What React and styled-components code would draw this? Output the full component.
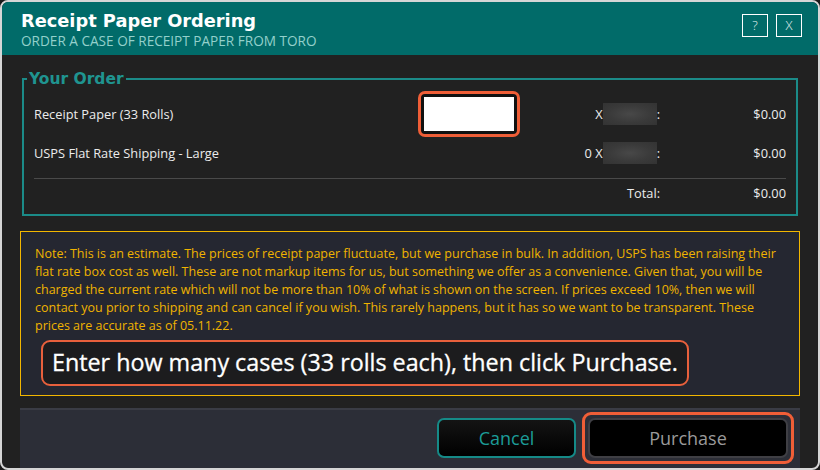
import React from "react";
import styled, { createGlobalStyle } from "styled-components";

const GlobalStyle = createGlobalStyle`
  html, body {
    margin: 0;
    padding: 0;
    background: #1a1a1a;
  }
  * {
    box-sizing: border-box;
  }
`;

const UI_FONT = `"Open Sans", "Noto Sans", sans-serif`;
const HEAD_FONT = `"DejaVu Sans", Verdana, sans-serif`;

const Window = styled.div`
  width: 820px;
  height: 470px;
  display: flex;
  flex-direction: column;
  background: #212121;
  border: 2px solid #d6d6d6;
  border-radius: 8px;
  overflow: hidden;
  font-family: ${UI_FONT};
`;

const TitleBar = styled.div`
  height: 53px;
  flex: none;
  background: #016b69;
  display: flex;
  justify-content: space-between;
  align-items: flex-start;
  padding: 8px 16px 0 19px;
`;

const TitleText = styled.div`
  display: flex;
  flex-direction: column;
`;

const Title = styled.h1`
  margin: 0;
  font-family: ${HEAD_FONT};
  font-weight: 700;
  font-size: 17.8px;
  line-height: 22px;
  color: #fff;
`;

const Subtitle = styled.div`
  font-size: 13.6px;
  line-height: 18px;
  color: #93d0cb;
`;

const TitleButtons = styled.div`
  display: flex;
  gap: 8px;
  margin-top: 4px;
`;

const TitleButton = styled.button`
  width: 26px;
  height: 23px;
  padding: 0;
  background: transparent;
  border: 1.5px solid #fff;
  color: #e8f4f3;
  font-family: ${UI_FONT};
  font-size: 13px;
  font-weight: 300;
  line-height: 1;
  cursor: pointer;
`;

const Body = styled.div`
  flex: 1;
  display: flex;
  flex-direction: column;
  padding: 15px 18px 0 18px;
`;

const OrderSet = styled.fieldset`
  margin: 0 2px;
  padding: 3px 10px 8px 10px;
  border: 2px solid #1b8b88;
  min-width: 0;
`;

const Legend = styled.legend`
  padding: 0 2px;
  margin-left: -7px;
  font-family: ${HEAD_FONT};
  font-weight: 700;
  font-size: 15.5px;
  line-height: 18px;
  color: #1f9490;
`;

const OrderGrid = styled.div`
  display: grid;
  grid-template-columns: 384px 102px 140px 1fr;
  grid-template-rows: 46px 32px auto 26px;
  align-items: center;
  color: #ececec;
  font-size: 12.8px;
`;

const Cell = styled.div`
  justify-self: ${(p) => (p.$align === "right" ? "end" : "start")};
  white-space: nowrap;
  display: flex;
  align-items: center;
`;

const Divider = styled.div`
  grid-column: 1 / -1;
  height: 1px;
  background: #4a4a4a;
  margin: 9px 0 1px;
`;

const InputRing = styled.div`
  width: 102px;
  height: 46px;
  border: 3px solid #ef5e37;
  border-radius: 7px;
  background: #111;
  padding: 3px;
`;

const QtyInput = styled.input`
  display: block;
  width: 100%;
  height: 100%;
  border: none;
  outline: none;
  background: #fff;
`;

const Blur = styled.span`
  display: inline-block;
  width: 54px;
  height: 22px;
  background: radial-gradient(ellipse at center, #484848 0%, #3a3a3a 55%, #333 100%);
`;

const NoteBox = styled.div`
  margin-top: 15px;
  border: 1px solid #f2b600;
  background: #252731;
  padding: 13px 10px 9px 14px;
`;

const NoteText = styled.p`
  margin: 0;
  color: #f0b400;
  font-size: 12.5px;
  line-height: 18px;
  white-space: nowrap;
`;

const Callout = styled.div`
  width: fit-content;
  margin: 5px 0 0 6px;
  height: 46px;
  padding: 0 9px;
  border: 2px solid #e8603c;
  border-radius: 9px;
  background: #1c1c1e;
  color: #fff;
  font-size: 23.3px;
  line-height: 41px;
  white-space: nowrap;
  -webkit-text-stroke: 0.3px #fff;
`;

const Footer = styled.div`
  margin-top: 12px;
  flex: 1;
  background: #2c2e37;
  border-top: 2px solid #3a3c45;
  display: flex;
  justify-content: flex-end;
  align-items: flex-start;
  padding: 2px 6px 0 0;
`;

const ButtonRing = styled.div`
  padding: 3px;
  border: 3px solid ${(p) => (p.$focus ? "#ef5e37" : "transparent")};
  border-radius: 9px;
`;

const ActionButton = styled.button`
  width: ${(p) => p.$w}px;
  height: 40px;
  border-radius: 7px;
  border: 2px solid ${(p) => (p.$primary ? "#3f3f44" : "#158a87")};
  background: ${(p) => (p.$primary ? "#000" : "linear-gradient(#141414, #000)")};
  color: ${(p) => (p.$primary ? "#9a9a9a" : "#1c9c98")};
  font-family: ${UI_FONT};
  font-size: 18px;
  cursor: pointer;
`;

const noteLines = [
  "Note: This is an estimate. The prices of receipt paper fluctuate, but we purchase in bulk. In addition, USPS has been raising their",
  "flat rate box cost as well. These are not markup items for us, but something we offer as a convenience. Given that, you will be",
  "charged the current rate which will not be more than 10% of what is shown on the screen. If prices exceed 10%, then we will",
  "contact you prior to shipping and can cancel if you wish. This rarely happens, but it has so we want to be transparent. These",
  "prices are accurate as of 05.11.22.",
];

export default function App() {
  return (
    <>
      <GlobalStyle />
      <Window>
        <TitleBar>
          <TitleText>
            <Title>Receipt Paper Ordering</Title>
            <Subtitle>ORDER A CASE OF RECEIPT PAPER FROM TORO</Subtitle>
          </TitleText>
          <TitleButtons>
            <TitleButton>?</TitleButton>
            <TitleButton>X</TitleButton>
          </TitleButtons>
        </TitleBar>
        <Body>
          <OrderSet>
            <Legend>Your Order</Legend>
            <OrderGrid>
              <Cell>Receipt Paper (33 Rolls)</Cell>
              <Cell>
                <InputRing>
                  <QtyInput type="text" />
                </InputRing>
              </Cell>
              <Cell $align="right">
                X<Blur />:
              </Cell>
              <Cell $align="right">$0.00</Cell>

              <Cell>USPS Flat Rate Shipping - Large</Cell>
              <Cell />
              <Cell $align="right">
                0 X<Blur />:
              </Cell>
              <Cell $align="right">$0.00</Cell>

              <Divider />

              <Cell />
              <Cell />
              <Cell $align="right">Total:</Cell>
              <Cell $align="right">$0.00</Cell>
            </OrderGrid>
          </OrderSet>
          <NoteBox>
            {noteLines.map((line) => (
              <NoteText key={line}>{line}</NoteText>
            ))}
            <Callout>Enter how many cases (33 rolls each), then click Purchase.</Callout>
          </NoteBox>
          <Footer>
            <ButtonRing>
              <ActionButton $w={139}>Cancel</ActionButton>
            </ButtonRing>
            <ButtonRing $focus>
              <ActionButton $w={200} $primary>
                Purchase
              </ActionButton>
            </ButtonRing>
          </Footer>
        </Body>
      </Window>
    </>
  );
}
